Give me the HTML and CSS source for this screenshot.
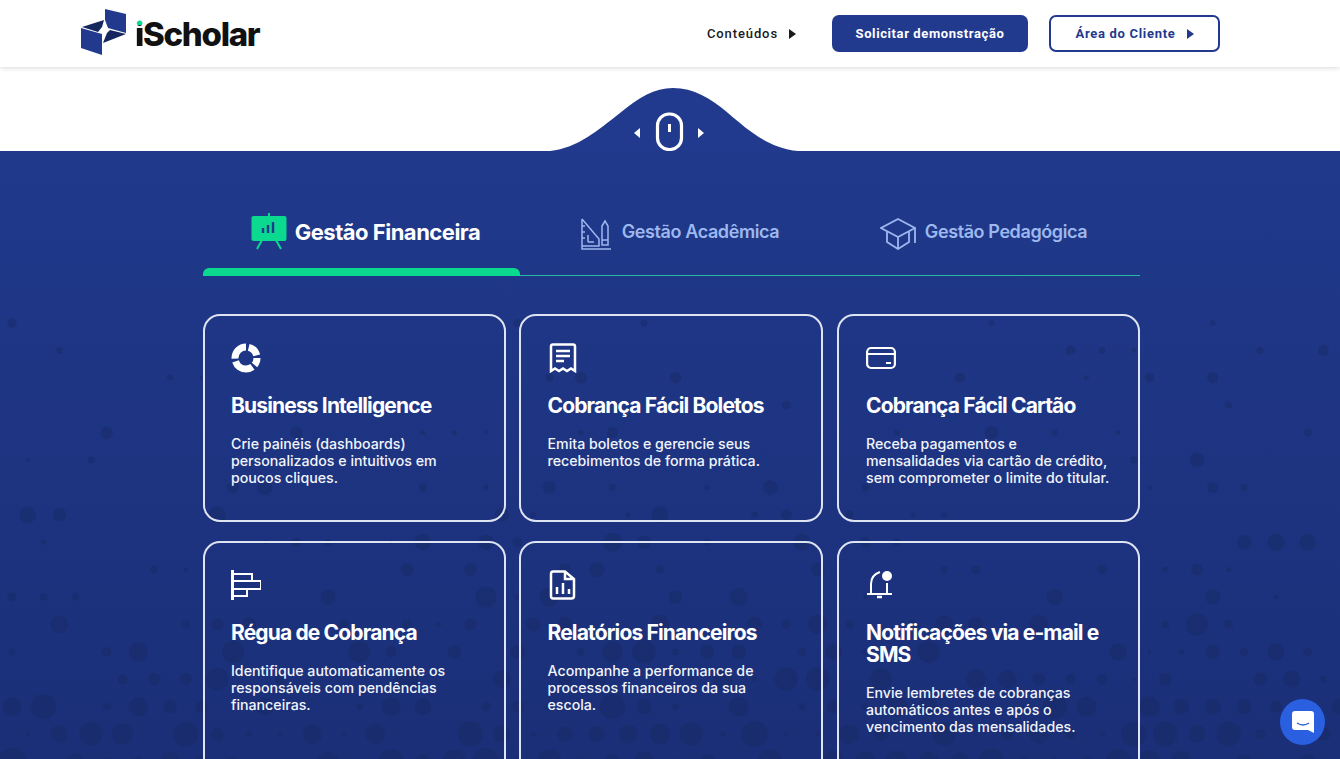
FILE: index.html
```html
<!DOCTYPE html>
<html lang="pt-BR">
<head>
  <meta charset="utf-8">
  <meta name="viewport" content="width=device-width, initial-scale=1.0">
  <title>iScholar</title>
  <link rel="stylesheet" href="styles.css">
</head>
<body>
  <header class="topbar">
    <a class="logo" href="#">
      <svg class="logo-mark" viewBox="0 0 46 46" width="46" height="46">
        <path d="M24 0 L45 5 V24 L27 19 L24 11 Z" fill="#223a8e"/>
        <path d="M0 19 L21 25 V46 L0 39 Z" fill="#223a8e"/>
        <path d="M22 34 L45 25 L29 21 L26 24 Z" fill="#16275f"/>
        <path d="M1 18 L23 11 L21 18 L17 23 Z" fill="#16275f"/>
      </svg>
      <span class="logo-text"><span class="logo-i">i</span>Scholar</span>
    </a>
    <nav class="topnav">
      <a class="nav-link" href="#">Conteúdos <i class="caret"></i></a>
      <a class="btn btn-solid" href="#">Solicitar demonstração</a>
      <a class="btn btn-outline" href="#">Área do Cliente <i class="caret"></i></a>
    </nav>
  </header>

  <div class="scroll-hint">
    <svg class="hump" viewBox="0 0 248 64" width="248" height="64">
      <path d="M0 64 C28 61 48 43 70 26 C90 10 104 1 123 1 C144 1 160 11 178 26 C198 43 218 61 248 64 Z" fill="#223a8e"/>
      <rect x="107.500" y="27" width="24" height="35.500" rx="11.500" fill="none" stroke="#fff" stroke-width="3.200"/>
      <path d="M119.500 37 V45" stroke="#fff" stroke-width="3"/>
      <path d="M90 41 L84 46 L90 51 Z M148 41 L154 46 L148 51 Z" fill="#fff"/>
    </svg>
  </div>

  <main class="features">
    <svg id="dots" class="dots" width="1340" height="608"></svg>
    <div class="wrap">
      <div class="tabs">
        <div class="tab tab-active">
          <svg viewBox="0 0 36 37" width="36" height="37">
            <path d="M18 0 V4" stroke="#0bd98f" stroke-width="2"/>
            <rect x="0.500" y="3" width="35" height="25" rx="2" fill="#0bd98f"/>
            <path d="M11 27 L6 36 M25 27 L30 36" stroke="#0bd98f" stroke-width="2"/>
            <path d="M12 15 V20 M17 12 V20 M22 9 V20" stroke="#223a8e" stroke-width="2.400"/>
          </svg>
          <span>Gestão Financeira</span>
        </div>
        <div class="tab tab-academic">
          <svg viewBox="0 0 30 32" width="30" height="32" fill="none" stroke="#9db8ee" stroke-width="1.500">
            <path d="M1 1 V31 H30 M1 1 L18 21 V28 H1"/>
            <path d="M1 8 H4 M1 14 H4 M1 20 H4 M7 24 V17 M7 24 H13"/>
            <path d="M21 8 L24 3 L27 8 V27 H21 Z M21 22 H27"/>
          </svg>
          <span>Gestão Acadêmica</span>
        </div>
        <div class="tab tab-pedagogic">
          <svg viewBox="0 0 36 32" width="36" height="32" fill="none" stroke="#9db8ee" stroke-width="1.800">
            <path d="M18 1 L35 10 L18 19 L1 10 Z"/>
            <path d="M7 13 V24 L18 31 L29 24 V13 M18 19 V31 M35 10 V25"/>
          </svg>
          <span>Gestão Pedagógica</span>
        </div>
      </div>

      <div class="cards">
        <article class="card">
          <svg class="card-icon" viewBox="0 0 30 30">
            <circle cx="15" cy="15" r="11" pathLength="100" fill="none" stroke="#fff" stroke-width="7" stroke-dasharray="17 4 11 4 30 4 30" stroke-dashoffset="-4" transform="rotate(-90 15 15)"/>
          </svg>
          <h3>Business Intelligence</h3>
          <p>Crie painéis (dashboards) personalizados e intuitivos em poucos cliques.</p>
        </article>
        <article class="card">
          <svg class="card-icon" viewBox="0 0 30 30" fill="none" stroke="#fff" stroke-width="2.500">
            <path d="M3 28 V3.500 Q3 1.500 5 1.500 H25 Q27 1.500 27 3.500 V28 L23 25.500 L19 28 L15 25.500 L11 28 L7 25.500 Z"/>
            <path d="M8 8 H22 M8 13 H22 M8 18 H16"/>
          </svg>
          <h3>Cobrança Fácil Boletos</h3>
          <p>Emita boletos e gerencie seus recebimentos de forma prática.</p>
        </article>
        <article class="card">
          <svg class="card-icon" viewBox="0 0 30 30" fill="none" stroke="#fff" stroke-width="2.200">
            <rect x="1.100" y="5" width="27.800" height="20" rx="4"/>
            <path d="M1 11 H29 M20 20 H25"/>
          </svg>
          <h3>Cobrança Fácil Cartão</h3>
          <p>Receba pagamentos e mensalidades via cartão de crédito, sem comprometer o limite do titular.</p>
        </article>
        <article class="card">
          <svg class="card-icon" viewBox="0 0 30 30" fill="none" stroke="#fff" stroke-width="2">
            <path d="M1.500 0 V30" stroke-width="3"/>
            <path d="M2 4 H21 V11 M2 11 H30 V19 H2 M2 19 H16 V26 H2"/>
          </svg>
          <h3>Régua de Cobrança</h3>
          <p>Identifique automaticamente os responsáveis com pendências financeiras.</p>
        </article>
        <article class="card">
          <svg class="card-icon" viewBox="0 0 30 30" fill="none" stroke="#fff" stroke-width="2.500">
            <path d="M5 1.500 H17 L26 9 V26 Q26 28.500 23.500 28.500 H5 Q3 28.500 3 26 V4 Q3 1.500 5 1.500 Z M17 1.500 V9 H26"/>
            <path d="M9 24 V17 M15 24 V13 M21 24 V19"/>
          </svg>
          <h3>Relatórios Financeiros</h3>
          <p>Acompanhe a performance de processos financeiros da sua escola.</p>
        </article>
        <article class="card">
          <svg class="card-icon" viewBox="0 0 30 30" fill="none" stroke="#fff" stroke-width="2">
            <path d="M14 2 Q5 5 5 14 V23 M21 13 V23 M1 24 H26"/>
            <path d="M11 27 H16" stroke-width="2.500"/>
            <circle cx="21" cy="6" r="5" fill="#fff" stroke="none"/>
          </svg>
          <h3>Notificações via e-mail e SMS</h3>
          <p>Envie lembretes de cobranças automáticos antes e após o vencimento das mensalidades.</p>
        </article>
      </div>
    </div>
  </main>

  <a class="chat" href="#">
    <svg viewBox="0 0 24 24" width="24" height="24">
      <path d="M4 1 H20 Q23 1 23 4 V23 L17 20 H4 Q1 20 1 17 V4 Q1 1 4 1 Z" fill="#fff"/>
      <path d="M6 13 Q12 17 18 13" fill="none" stroke="#2a5fe0" stroke-width="1.500"/>
    </svg>
  </a>

  <script src="dots.js"></script>
</body>
</html>
```

FILE: styles.css
```css
* {
  box-sizing: border-box;
  margin: 0;
  padding: 0;
}
html, body {
  height: 100vh;
  overflow: hidden;
}
body {
  font-family: 'Inter', 'Liberation Sans', sans-serif;
  background: white;
  color: white;
}
a {
  text-decoration: none;
}
.topbar {
  position: relative;
  z-index: 2;
  height: 67px;
  background: white;
  box-shadow: 0 1px 5px rgba(0,0,0,0.15);
  display: flex;
  align-items: center;
  justify-content: space-between;
  padding: 0 120px 0 81px;
}
.logo {
  display: flex;
  align-items: center;
  gap: 8px;
}
.logo-mark {
  margin-top: -4px;
}
.logo-text {
  font-family: 'Inter', sans-serif;
  font-weight: 800;
  font-size: 33px;
  letter-spacing: -1.300px;
  color: #111;
}
.logo-i {
  background: linear-gradient(#0bd98f 0 28%, #111 28%);
  -webkit-background-clip: text;
  background-clip: text;
  color: transparent;
}
.topnav {
  display: flex;
  align-items: center;
  font-family: 'Roboto', sans-serif;
  font-size: 13px;
  font-weight: 500;
  letter-spacing: 0.900px;
}
.nav-link {
  color: #1a1a1a;
  margin-right: 36px;
  display: flex;
  align-items: center;
  gap: 11px;
}
.caret {
  display: inline-block;
  border-left: 7px solid currentColor;
  border-top: 5px solid transparent;
  border-bottom: 5px solid transparent;
}
.btn {
  height: 37px;
  border-radius: 7px;
  display: flex;
  align-items: center;
  justify-content: center;
  font-weight: 700;
}
.btn-solid {
  width: 196px;
  background: #223a8e;
  color: white;
  letter-spacing: 0.600px;
  margin-right: 21px;
}
.btn-outline {
  width: 171px;
  border: 2px solid #223a8e;
  color: #223a8e;
  letter-spacing: 0.700px;
  gap: 11px;
}
.scroll-hint {
  height: 84px;
  display: flex;
  align-items: flex-end;
  padding-left: 550px;
}
.hump {
  display: block;
}
.features {
  position: relative;
  height: 608px;
  background: linear-gradient(180deg, #20398b 0%, #1b2f78 100%);
  padding-top: 62px;
}
.dots {
  position: absolute;
  left: 0;
  top: 0;
}
.wrap {
  position: relative;
  width: 937px;
  margin-left: 203px;
}
.tabs {
  display: grid;
  grid-template-columns: 317px 317px 303px;
  height: 63px;
  border-bottom: 1px solid #25b9a5;
}
.tab {
  display: flex;
  align-items: flex-start;
  justify-content: center;
  gap: 11px;
  padding-top: 5px;
  font-size: 18px;
  font-weight: 600;
  letter-spacing: -0.400px;
  color: #9db8ee;
  line-height: 27px;
}
.tab-academic {
  padding-left: 3px;
}
.tab-pedagogic {
  gap: 9px;
  padding-right: 10px;
}
.tab-active {
  position: relative;
  font-size: 22px;
  font-weight: 700;
  color: white;
  letter-spacing: -0.500px;
  gap: 8px;
  padding-top: 0;
  padding-left: 8px;
  line-height: 38px;
}
.tab-active::after {
  content: '';
  position: absolute;
  left: 0;
  right: 0;
  bottom: -1px;
  height: 8px;
  background: #0bd98f;
  border-radius: 6px 6px 0 0;
}
.cards {
  display: grid;
  grid-template-columns: 302.500px 304px 303.500px;
  grid-template-rows: 208px 240px;
  column-gap: 13.500px;
  row-gap: 19px;
  margin-top: 38px;
}
.card {
  border: 2px solid #dfe4f3;
  border-radius: 17px;
  padding: 27px 26px 27px 26.500px;
}
.card:nth-child(3n+1) {
  padding-left: 26px;
}
.card:nth-child(3n) {
  padding-left: 27.500px;
}
.card-icon {
  display: block;
  width: 30px;
  height: 30px;
  margin-bottom: 22px;
}
.card h3 {
  font-size: 21px;
  font-weight: 700;
  line-height: 22px;
  letter-spacing: -0.850px;
  margin-bottom: 18px;
}
.card p {
  font-size: 14.200px;
  font-weight: 500;
  line-height: 17px;
  color: #f2f4fb;
}
.chat {
  position: fixed;
  right: 15px;
  bottom: 14px;
  width: 45px;
  height: 46px;
  border-radius: 50%;
  background: #2a5fe0;
  display: flex;
  align-items: center;
  justify-content: center;
}
```

FILE: dots.js
```js
// background dots, hexagonal lattice, denser towards the bottom
var svg = document.getElementById('dots');
var seed = 7;
function rnd() {
  seed = (seed * 16807) % 2147483647;
  return seed / 2147483647;
}
var html = '';
for (var row = 0; row < 17; row++) {
  var y = 172 + row * 27.4;
  var depth = row / 16;
  for (var col = 0; col < 43; col++) {
    var x = 12 + col * 31.6 + (row % 2 ? 15.8 : 0);
    if (rnd() > 0.16 + depth * depth * 0.75) continue;
    var r = 2 + rnd() * (3 + depth * 9);
    html += '<circle cx="' + x.toFixed(1) + '" cy="' + y.toFixed(1) + '" r="' + r.toFixed(1) + '" fill="#16275f" fill-opacity="0.4"/>';
  }
}
svg.innerHTML = html;
```
